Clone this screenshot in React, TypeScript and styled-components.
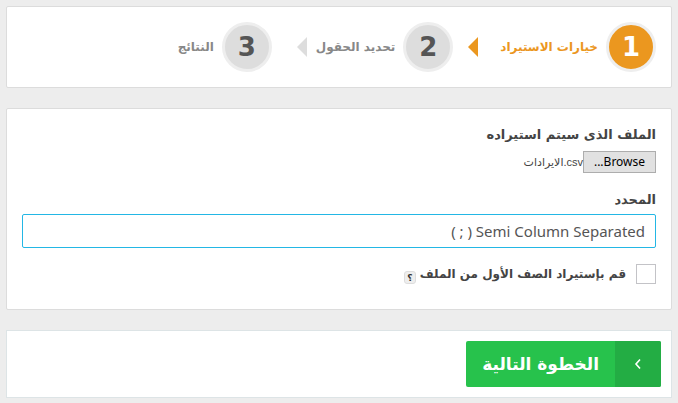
import React from "react";
import styled, { createGlobalStyle } from "styled-components";

const GlobalStyle = createGlobalStyle`
  *, *::before, *::after { box-sizing: border-box; }
  body {
    margin: 0;
    background: #ededed;
    color: #444;
    font-family: "DejaVu Sans", sans-serif;
  }
`;

const Page = styled.main`
  display: flex;
  flex-direction: column;
  gap: 20px;
  padding: 6px;
`;

const Card = styled.section`
  background: #fff;
  border: 1px solid #dcdcdc;
  border-radius: 2px;
`;

const Steps = styled.ol`
  display: flex;
  align-items: center;
  list-style: none;
  margin: 0;
  padding: 15px;
`;

const Step = styled.li<{ $active?: boolean }>`
  display: flex;
  align-items: center;
  gap: 8px;
  color: ${(p) => (p.$active ? "#eb971f" : "#888")};
`;

const StepNumber = styled.span<{ $active?: boolean }>`
  display: flex;
  align-items: center;
  justify-content: center;
  width: 50px;
  height: 50px;
  border: 3px solid #eee;
  border-radius: 50%;
  background: ${(p) => (p.$active ? "#eb971f" : "#ddd")};
  color: ${(p) => (p.$active ? "#fff" : "#555")};
  font-size: 26px;
  font-weight: 700;
  line-height: 30px;
`;

const StepLabel = styled.span`
  font-size: 12px;
  font-weight: 700;
  line-height: 20px;
  white-space: nowrap;
`;

const StepArrow = styled.svg<{ $active?: boolean }>`
  width: 10px;
  height: 20px;
  flex: none;
  margin-inline: ${(p) => (p.$active ? "14px 15px" : "1px 25px")};
  fill: ${(p) => (p.$active ? "#eb971f" : "#ddd")};
`;

const Form = styled.form`
  display: flex;
  flex-direction: column;
  padding: 16px 15px 25px;
`;

const FieldLabel = styled.label<{ $compact?: boolean }>`
  align-self: flex-start;
  font-size: ${(p) => (p.$compact ? "12px" : "13px")};
  font-weight: 700;
  line-height: 20px;
`;

const FileRow = styled.div`
  display: flex;
  align-items: center;
  margin: 6px 0 17px;
`;

const HiddenFile = styled.input`
  display: none;
`;

const BrowseButton = styled.button`
  width: 73px;
  height: 22px;
  padding: 0;
  border: 1px solid #adadad;
  background: #e1e1e1;
  color: #000;
  font: 12px/18px "Noto Sans", sans-serif;
`;

const FileName = styled.span`
  font: 11px/20px "Liberation Sans", "DejaVu Sans", sans-serif;
`;

const Select = styled.select`
  appearance: none;
  width: 100%;
  height: 34px;
  margin: 4px 0 16px;
  padding: 0 10px;
  border: 1px solid #23b7e5;
  border-radius: 2px;
  background: #fff;
  color: #555;
  font: 15px/24px "Noto Sans", sans-serif;
  outline: none;
`;

const CheckRow = styled.div`
  display: flex;
  align-items: center;
`;

const Checkbox = styled.input`
  appearance: none;
  width: 20px;
  height: 20px;
  margin: 0;
  margin-inline-end: 10px;
  border: 1px solid #c3c3c7;
  background: #fff;

  &:checked { background: #23b7e5; }
`;

const HelpButton = styled.button`
  width: 12px;
  height: 13px;
  margin-top: 7px;
  margin-inline-start: 4px;
  padding: 0;
  border: 1px solid #ddd;
  border-radius: 3px;
  background: #eee;
  color: #333;
  font: 700 9px/10px "DejaVu Sans", sans-serif;
`;

const Footer = styled.footer`
  display: flex;
  padding: 10px;
  background: #fff;
  border: 1px solid #dde4e6;
`;

const NextButton = styled.button`
  display: flex;
  align-items: stretch;
  height: 46px;
  padding: 0;
  border: 0;
  border-radius: 2px;
  overflow: hidden;
  background: #27c24c;
  color: #fff;
  font: 700 17px/46px "DejaVu Sans", sans-serif;
`;

const NextIcon = styled.span`
  display: flex;
  align-items: center;
  justify-content: center;
  width: 46px;
  background: #23ad44;
`;

const NextText = styled.span`
  padding: 0 16px;
`;

const steps = [
  { label: "خيارات الاستيراد", active: true },
  { label: "تحديد الحقول", active: false },
  { label: "النتائج", active: false },
];

export default function App() {
  const fileInput = React.useRef<HTMLInputElement>(null);
  const [fileName, setFileName] = React.useState("الايرادات.csv");

  return (
    <Page dir="rtl" lang="ar">
      <GlobalStyle />
      <Card>
        <Steps>
          {steps.map(({ label, active }, i) => (
            <Step key={label} $active={active} aria-current={active ? "step" : undefined}>
              <StepNumber $active={active}>{i + 1}</StepNumber>
              <StepLabel>{label}</StepLabel>
              {i < steps.length - 1 && (
                <StepArrow $active={active} viewBox="0 0 10 20" aria-hidden="true">
                  <path d="M10 0V20L0 10Z" />
                </StepArrow>
              )}
            </Step>
          ))}
        </Steps>
      </Card>

      <Card>
        <Form id="import" onSubmit={(e) => e.preventDefault()}>
          <FieldLabel htmlFor="file">الملف الذى سيتم استيراده</FieldLabel>
          <FileRow>
            <HiddenFile
              id="file"
              type="file"
              ref={fileInput}
              onChange={(e) => setFileName(e.target.files?.[0]?.name ?? "")}
            />
            <BrowseButton type="button" onClick={() => fileInput.current?.click()}>
              Browse...
            </BrowseButton>
            <FileName dir="ltr">{fileName}</FileName>
          </FileRow>
          <FieldLabel htmlFor="separator">المحدد</FieldLabel>
          <Select id="separator" defaultValue="semi">
            <option value="semi">Semi Column Separated ( ; )</option>
          </Select>
          <CheckRow>
            <Checkbox id="first-row" type="checkbox" />
            <FieldLabel $compact htmlFor="first-row">قم بإستيراد الصف الأول من الملف</FieldLabel>
            <HelpButton type="button">؟</HelpButton>
          </CheckRow>
        </Form>
      </Card>

      <Footer>
        <NextButton type="submit" form="import">
          <NextIcon aria-hidden="true">
            <svg width="8" height="12" viewBox="0 0 8 12" fill="none" stroke="currentColor" strokeWidth="1.6">
              <path d="M6 1.5L2 6L6 10.5" />
            </svg>
          </NextIcon>
          <NextText>الخطوة التالية</NextText>
        </NextButton>
      </Footer>
    </Page>
  );
}
